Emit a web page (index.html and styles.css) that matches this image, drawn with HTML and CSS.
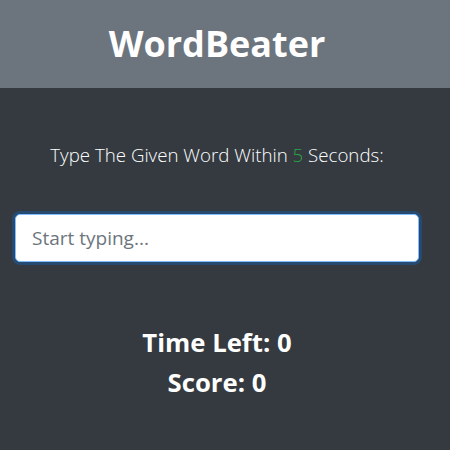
FILE: index.html
```html
<!DOCTYPE html>
<html>
<head>
<meta charset="utf-8">
<link rel="stylesheet" href="styles.css">
</head>
<body>
<header class="header">
  <h1 class="title">WordBeater</h1>
</header>
<main class="main">
  <p class="lead">Type The Given Word Within <span class="secs">5</span> Seconds:</p>
  <input class="field" type="text" placeholder="Start typing..." autofocus>
  <h3 class="stat">Time Left: <span>0</span></h3>
  <h3 class="stat">Score: <span>0</span></h3>
</main>
</body>
</html>
```
FILE: styles.css
```css
html, body {
  margin: 0;
  padding: 0;
  height: 100%;
}
body {
  background: #343a40;
  color: #fff;
  font-family: "Open Sans", "Noto Sans", sans-serif;
}
.header {
  background: #6c757d;
  height: 88px;
  width: 434px;
  padding-right: 16px;
  display: flex;
  align-items: center;
  justify-content: center;
}
.title {
  margin: 0;
  font-size: 36px;
  font-weight: 700;
  line-height: 1.2;
}
.main {
  box-sizing: border-box;
  width: 434px;
  padding: 0 15px;
  display: flex;
  flex-direction: column;
  align-items: center;
}
.lead {
  margin: 53px 0 0;
  font-size: 18.7px;
  font-weight: 300;
  line-height: 28px;
}
.secs {
  color: #28a745;
}
.field {
  box-sizing: border-box;
  margin-top: 45px;
  width: 100%;
  height: 48px;
  padding: 8px 16px;
  font-family: inherit;
  font-size: 19px;
  color: #495057;
  background: #fff;
  border: 1px solid #80bdff;
  border-radius: 5px;
  outline: none;
  box-shadow: 0 0 0 3px rgba(0, 123, 255, 0.25);
}
.field::placeholder {
  color: #6c757d;
}
.stat {
  margin: 0;
  font-size: 25.7px;
  font-weight: 700;
  line-height: 40px;
}
.stat:first-of-type {
  margin-top: 61px;
}
```
